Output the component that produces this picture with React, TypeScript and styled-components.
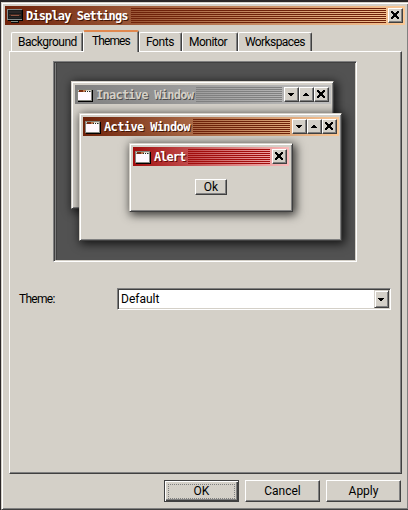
import React from 'react';
import styled, { createGlobalStyle, css } from 'styled-components';

const face = '#d4d0c8';

const Global = createGlobalStyle`
  * { box-sizing: border-box; }
  body { margin: 0; overflow: hidden; background: #2b2728; }
  #root { width: 408px; height: 510px; overflow: hidden; }
`;

const raised = css`
  background: ${face};
  border: 1px solid;
  border-color: #fff #404040 #404040 #fff;
  box-shadow: inset -1px -1px #808080;
`;

const Label = styled.span<{ $spacing?: number }>`
  display: block;
  font: 12px/14px Roboto, sans-serif;
  letter-spacing: ${p => p.$spacing ?? 0}px;
  color: #000;
  white-space: pre;
`;

const Frame = styled.div`
  width: 408px;
  height: 508px;
  margin: 2px 0 0 1px;
  padding: 3px 1px 0 3px;
  display: flex;
  flex-direction: column;
  background: ${face};
  border: 1px solid;
  border-color: ${face} #404040 #404040 ${face};
  box-shadow: inset 1px 1px #fff, inset -1px -1px #808080;
`;

type Tone = 'main' | 'inactive' | 'active' | 'alert';
const tones = {
  main: { from: '#6e220a', to: '#fac896', line: '#6e220a', text: '#fff', shade: '#421405' },
  active: { from: '#6e220a', to: '#fac896', line: '#6e220a', text: '#fff', shade: '#421405' },
  inactive: { from: '#808080', to: '#c0c0c0', line: '#808080', text: '#d5d0c7', shade: '#4c4c4c' },
  alert: { from: '#a10d0d', to: '#fabbbb', line: '#a10d0d', text: '#fff', shade: '#610808' },
};

const Bar = styled.div<{ $tone: Tone; $width: number }>`
  width: ${p => p.$width}px;
  height: 19px;
  flex: none;
  padding: 2px;
  display: flex;
  background: linear-gradient(90deg, ${p => tones[p.$tone].from}, ${p => tones[p.$tone].to});
`;

const BarIcon = styled.span`
  width: 16px;
  height: 16px;
  flex: none;
  svg { display: block; }
`;

const BarTitle = styled.span<{ $tone: Tone; $width: number; $spacing: number }>`
  width: ${p => p.$width}px;
  flex: none;
  padding-left: 3px;
  font: bold 12px/16px "DejaVu Sans Mono", monospace;
  letter-spacing: ${p => p.$spacing}px;
  white-space: pre;
  color: ${p => tones[p.$tone].text};
  text-shadow: 1px 1px ${p => tones[p.$tone].shade};
`;

const Stripes = styled.span<{ $tone: Tone }>`
  flex: 1;
  height: 15px;
  margin-right: 2px;
  background: repeating-linear-gradient(${p => tones[p.$tone].line} 0 1px, transparent 1px 2px);
`;

const BarButton = styled.span`
  ${raised}
  width: 15px;
  height: 15px;
  flex: none;
  svg { display: block; }
`;

type Glyph = 'down' | 'up' | 'close';
const glyphs: Record<Glyph, string> = {
  down: 'M3 5h6v1H8v1H7v1H5V7H4V6H3z',
  up: 'M5 5h2v1h1v1h1v1H3V7h1V6h1z',
  close: 'M2 2h2v1h1v1h2V3h1V2h2v2H9v1H8v2h1v1h1v2H8V9H7V8H5v1H4v1H2V8h1V7h1V5H3V4H2z',
};

const ControlButton = ({ glyph }: { glyph: Glyph }) => (
  <BarButton>
    <svg width="13" height="13" shapeRendering="crispEdges">
      <path d={glyphs[glyph]} />
    </svg>
  </BarButton>
);

const AppIcon = () => (
  <svg width="16" height="16" shapeRendering="crispEdges">
    <path fill="#000" d="M1 3h15v12H1z" />
    <path fill="#858780" d="M0 2h15v12H0z" />
    <path fill="#d4d0c8" d="M1 3h13v1H1z" />
    <path fill="#fff8ff" d="M1 5h13v8H1z" />
    <path fill="#7a2a10" d="M2 3h4v2H2z" />
    <path fill="#bd7850" d="M6 3h3v2H6z" />
    <path fill="#222" d="M8 4h1v1H8zM10 4h1v1h-1zM12 4h1v1h-1z" />
    <path fill="#fff" d="M9 4h1v1H9zM11 4h1v1h-1z" />
  </svg>
);

const DisplayIcon = () => (
  <svg width="16" height="16" shapeRendering="crispEdges">
    <path fill="#000" d="M1 2h15v11H1z" />
    <path fill="#858c8c" d="M0 1h15v11H0z" />
    <path fill="#171b1c" d="M1 2h14v9H1z" />
    <path fill="#402720" d="M2 6h12v2H2z" />
    <path fill="#8c5340" d="M4 7h8v1H4z" />
    <path fill="#292526" d="M2 3h12v2H2zM2 9h12v1H2z" />
    <path fill="#0a0a0a" d="M4 13h8v2H4z" />
    <path fill="#829083" d="M4 13h7v1H4z" />
  </svg>
);

interface TitleProps {
  tone: Tone; width: number; title: string; titleWidth: number; spacing: number; controls: Glyph[];
}
const TitleBar = ({ tone, width, title, titleWidth, spacing, controls }: TitleProps) => (
  <Bar $tone={tone} $width={width}>
    <BarIcon>{tone === 'main' ? <DisplayIcon /> : <AppIcon />}</BarIcon>
    <BarTitle $tone={tone} $width={titleWidth} $spacing={spacing}>{title}</BarTitle>
    <Stripes $tone={tone} />
    {controls.map(glyph => <ControlButton key={glyph} glyph={glyph} />)}
  </Bar>
);

const Tabs = styled.div`
  height: 26px;
  flex: none;
  padding-left: 6px;
  display: flex;
  align-items: flex-end;
`;

const Tab = styled.div<{ $width: number; $active?: boolean }>`
  width: ${p => p.$width}px;
  height: 19px;
  padding: 2px 0 0 6px;
  border: solid #fff;
  border-width: 1px 1px 0 1px;
  border-right-color: #404040;
  border-radius: 2px 2px 0 0;
  box-shadow: inset -1px 0 #808080;
  ${p => p.$active && css`
    height: 22px;
    margin-bottom: -1px;
    padding: 2px 0 0 8px;
    border-top: 2px solid #e0884f;
    background: ${face};
    position: relative;
  `}
`;

const Panel = styled.div`
  width: 393px;
  height: 423px;
  flex: none;
  margin-left: 4px;
  padding: 9px 0 0 43px;
  border: 1px solid;
  border-color: #fff #404040 #404040 #fff;
  box-shadow: inset -1px -1px #808080;
`;

const Preview = styled.div`
  position: relative;
  width: 304px;
  height: 201px;
  border: 1px solid;
  border-color: #808080 #fff #fff #808080;
  background: #525252;
  box-shadow: inset 1px 1px #404040, inset -1px -1px ${face}, inset 2px 0 #808080, inset 3px 0 #404040;
  overflow: hidden;
`;

const MiniWindow = styled.div<{ $x: number; $y: number; $w: number; $h: number }>`
  position: absolute;
  left: ${p => p.$x}px;
  top: ${p => p.$y}px;
  width: ${p => p.$w}px;
  height: ${p => p.$h}px;
  padding: 3px;
  background: ${face};
  border: 1px solid;
  border-color: ${face} #404040 #404040 ${face};
  box-shadow: inset 1px 1px #fff, inset -1px -1px #808080, 2px 2px 9px 1px rgba(0, 0, 0, .75);
`;

const AlertBody = styled.div`
  display: flex;
  padding: 13px 0 0 62px;
`;

const SmallButton = styled.div`
  ${raised}
  width: 32px;
  height: 16px;
  text-align: center;
`;

const Field = styled.div`
  display: flex;
  align-items: center;
  margin: 26px 0 0 -34px;
`;

const FieldName = styled.div`
  width: 98px;
`;

const Combo = styled.div`
  width: 274px;
  height: 22px;
  display: flex;
  justify-content: space-between;
  padding: 1px;
  background: #fff;
  border: 1px solid;
  border-color: #808080 #fff #fff #808080;
  box-shadow: inset 1px 1px #404040, inset -1px -1px ${face};
`;

const ComboValue = styled.div`
  padding: 2px 0 0 2px;
`;

const Arrow = styled.div`
  width: 15px;
  height: 18px;
  background: ${face};
  border: 1px solid;
  border-color: ${face} #404040 #404040 ${face};
  box-shadow: inset 1px 1px #fff, inset -1px -1px #808080;
  svg { display: block; }
`;

const Actions = styled.div`
  display: flex;
  gap: 6px;
  padding: 6px 0 0 159px;
`;

const Button = styled.div<{ $primary?: boolean }>`
  ${raised}
  width: 75px;
  height: 22px;
  flex: none;
  display: flex;
  align-items: center;
  justify-content: center;
  ${p => p.$primary && css`
    border-color: #404040;
    box-shadow: inset 1px 1px #fff, inset -1px -1px #404040, inset -2px -2px #808080;
  `}
`;

const Focus = styled.div`
  width: 67px;
  height: 15px;
  display: flex;
  align-items: center;
  justify-content: center;
  border: 1px dotted #808080;
`;

export default function App() {
  return (
    <>
      <Global />
      <Frame>
        <TitleBar tone="main" width={400} title="Display Settings" titleWidth={108} spacing={-0.87} controls={['close']} />
        <Tabs>
          <Tab $width={72}><Label $spacing={-0.5}>Background</Label></Tab>
          <Tab $width={56} $active><Label $spacing={-0.9}>Themes</Label></Tab>
          <Tab $width={43}><Label $spacing={-0.4}>Fonts</Label></Tab>
          <Tab $width={56}><Label $spacing={-0.5}>Monitor</Label></Tab>
          <Tab $width={74}><Label $spacing={-0.6}>Workspaces</Label></Tab>
        </Tabs>
        <Panel>
          <Preview>
            <MiniWindow $x={17} $y={19} $w={263} $h={128}>
              <TitleBar tone="inactive" width={256} title="Inactive Window" titleWidth={103} spacing={-0.75} controls={['down', 'up', 'close']} />
            </MiniWindow>
            <MiniWindow $x={25} $y={51} $w={263} $h={128}>
              <TitleBar tone="active" width={256} title="Active Window" titleWidth={92} spacing={-0.63} controls={['down', 'up', 'close']} />
            </MiniWindow>
            <MiniWindow $x={75} $y={81} $w={164} $h={69}>
              <TitleBar tone="alert" width={156} title="Alert" titleWidth={37} spacing={-1} controls={['close']} />
              <AlertBody><SmallButton><Label>Ok</Label></SmallButton></AlertBody>
            </MiniWindow>
          </Preview>
          <Field>
            <FieldName><Label $spacing={-0.7}>Theme:</Label></FieldName>
            <Combo>
              <ComboValue><Label>Default</Label></ComboValue>
              <Arrow>
                <svg width="13" height="16" shapeRendering="crispEdges">
                  <path d="M3 7h6v1H8v1H7v1H5V9H4V8H3z" />
                </svg>
              </Arrow>
            </Combo>
          </Field>
        </Panel>
        <Actions>
          <Button $primary><Focus><Label>OK</Label></Focus></Button>
          <Button><Label>Cancel</Label></Button>
          <Button><Label>Apply</Label></Button>
        </Actions>
      </Frame>
    </>
  );
}
